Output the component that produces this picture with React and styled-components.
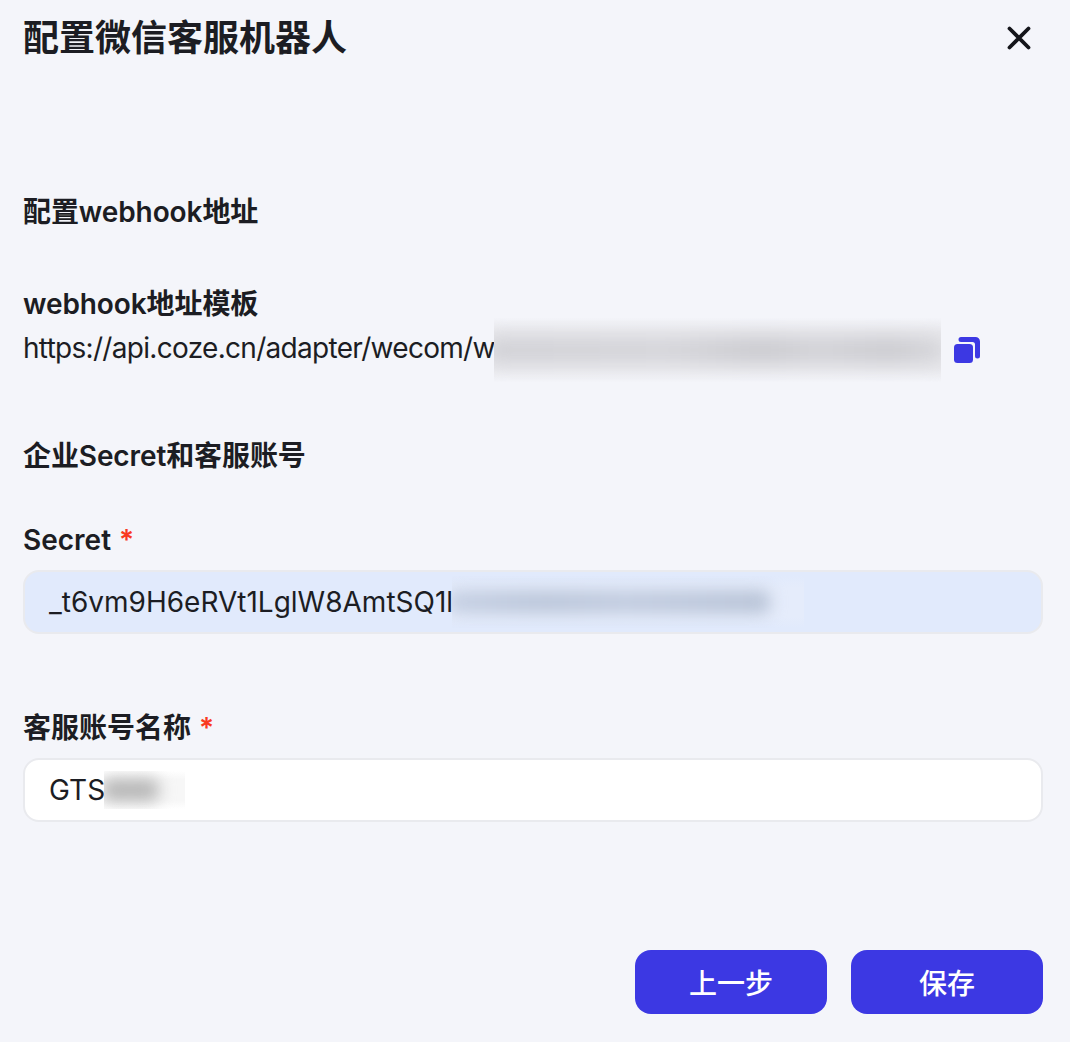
import React from "react";
import styled, { createGlobalStyle } from "styled-components";

const GlobalStyle = createGlobalStyle`
  html, body {
    margin: 0;
    padding: 0;
    background: #f4f5fa;
  }
  * {
    box-sizing: border-box;
  }
`;

const Wrap = styled.div`
  width: 1070px;
  height: 1042px;
  padding: 14px 27px 28px 23px;
  display: flex;
  flex-direction: column;
  background: #f4f5fa;
  color: #1c1d23;
  font-family: Inter, "Noto Sans CJK SC", sans-serif;
  overflow: hidden;
`;

const Header = styled.div`
  display: flex;
  align-items: center;
  justify-content: space-between;
  height: 48px;
  padding-right: 12px;
`;

const Title = styled.div`
  font-size: 36px;
  line-height: 48px;
  font-weight: 600;
`;

const CloseBtn = styled.button`
  width: 32px;
  height: 32px;
  padding: 0;
  margin-right: -4px;
  border: 0;
  background: none;
  color: #14151a;
  display: flex;
  align-items: center;
  justify-content: center;
`;

const SectionTitle = styled.div`
  font-size: 28px;
  line-height: 40px;
  font-weight: 600;
  letter-spacing: -0.1px;
  margin-top: ${(p) => p.$top}px;
`;

const SubTitle = styled(SectionTitle)``;

const UrlRow = styled.div`
  display: flex;
  align-items: center;
  height: 44px;
  margin-top: 2px;
  font-size: 28px;
  line-height: 40px;
  letter-spacing: -0.7px;
  white-space: nowrap;
`;

const Masked = styled.span`
  display: block;
  position: relative;
  flex: none;
  overflow: hidden;
  width: ${(p) => p.$width}px;
  height: ${(p) => p.$height}px;
  margin-top: ${(p) => p.$shift || 0}px;
  margin-left: -1px;
  background: linear-gradient(
    transparent,
    ${(p) => p.$bg} 22%,
    ${(p) => p.$bg} 78%,
    transparent
  );

  &::after {
    content: "";
    position: absolute;
    left: ${(p) => p.$inset}px;
    right: ${(p) => p.$insetRight}px;
    top: 50%;
    height: ${(p) => p.$barHeight}px;
    margin-top: -${(p) => p.$barHeight / 2}px;
    border-radius: 8px;
    background: ${(p) => p.$bar};
    filter: blur(${(p) => p.$blur}px);
  }
`;

const CopyBtn = styled.span`
  display: flex;
  margin-left: 13px;
  margin-top: 4px;
  color: #3c38e3;
`;

const Field = styled.div`
  margin-top: ${(p) => p.$top}px;
`;

const Label = styled.div`
  display: flex;
  gap: 8px;
  font-size: 28px;
  line-height: 40px;
  font-weight: 600;
  height: 40px;
`;

const Star = styled.span`
  color: #f93920;
  font-weight: 600;
`;

const InputBox = styled.div`
  display: flex;
  align-items: center;
  height: 64px;
  margin-top: 10px;
  padding: 0 24px;
  border: 2px solid #e9eaee;
  border-radius: 16px;
  background: ${(p) => p.$bg};
  font-size: 28px;
  white-space: nowrap;
`;

const Footer = styled.div`
  display: flex;
  justify-content: flex-end;
  gap: 24px;
  margin-top: auto;
`;

const Button = styled.button`
  width: 192px;
  height: 64px;
  border: 0;
  border-radius: 16px;
  background: #3c38e3;
  color: #fff;
  font-family: inherit;
  font-size: 28px;
  font-weight: 500;
`;

const CloseIcon = () => (
  <svg width="24" height="24" viewBox="0 0 24 24" fill="none">
    <path
      d="M2.5 2.5l19 19M21.5 2.5l-19 19"
      stroke="currentColor"
      strokeWidth="3.8"
      strokeLinecap="round"
    />
  </svg>
);

const CopyIcon = () => (
  <svg width="26" height="26" viewBox="0 0 26 26" fill="currentColor">
    <rect x="0" y="7" width="19" height="19" rx="3.5" />
    <path d="M7 0H21.5A4.5 4.5 0 0 1 26 4.5V19A2 2 0 0 1 21 19V7.5A2.5 2.5 0 0 0 18.5 5H7A2.5 2.5 0 0 1 7 0Z" />
  </svg>
);

export default function App() {
  return (
    <Wrap>
      <GlobalStyle />
      <Header>
        <Title>配置微信客服机器人</Title>
        <CloseBtn>
          <CloseIcon />
        </CloseBtn>
      </Header>

      <SectionTitle $top={130}>配置webhook地址</SectionTitle>

      <SubTitle $top={52}>webhook地址模板</SubTitle>
      <UrlRow>
        https://api.coze.cn/adapter/wecom/w
        <Masked
          $width={447}
          $height={64}
          $shift={4}
          $bg="#ebebef"
          $bar="linear-gradient(90deg, #cfcfd4, #d3d3d8 40%, #c8c8cd 60%, #d0d0d5 72%, #c9c9ce 88%, #d6d6da)"
          $barHeight={26}
          $blur={10}
          $inset={-10}
          $insetRight={-6}
        />
        <CopyBtn>
          <CopyIcon />
        </CopyBtn>
      </UrlRow>

      <SectionTitle $top={66}>企业Secret和客服账号</SectionTitle>

      <Field $top={44}>
        <Label>
          Secret <Star>*</Star>
        </Label>
        <InputBox $bg="#e1eafc">
          _t6vm9H6eRVt1LglW8AmtSQ1l
          <Masked
            $width={352}
            $height={52}
            $bg="#e5ecfb"
            $bar="linear-gradient(90deg, #c6d0e3, #bcc7da 30%, #c2ccdf 55%, #b9c4d7)"
            $barHeight={24}
            $blur={8}
            $inset={-4}
            $insetRight={34}
          />
        </InputBox>
      </Field>

      <Field $top={74}>
        <Label>
          客服账号名称 <Star>*</Star>
        </Label>
        <InputBox $bg="#fff">
          GTS
          <Masked
            $width={81}
            $height={38}
            $bg="#f7f7f7"
            $bar="#b5b5b5"
            $barHeight={22}
            $blur={8}
            $inset={-2}
            $insetRight={26}
          />
        </InputBox>
      </Field>

      <Footer>
        <Button>上一步</Button>
        <Button>保存</Button>
      </Footer>
    </Wrap>
  );
}
